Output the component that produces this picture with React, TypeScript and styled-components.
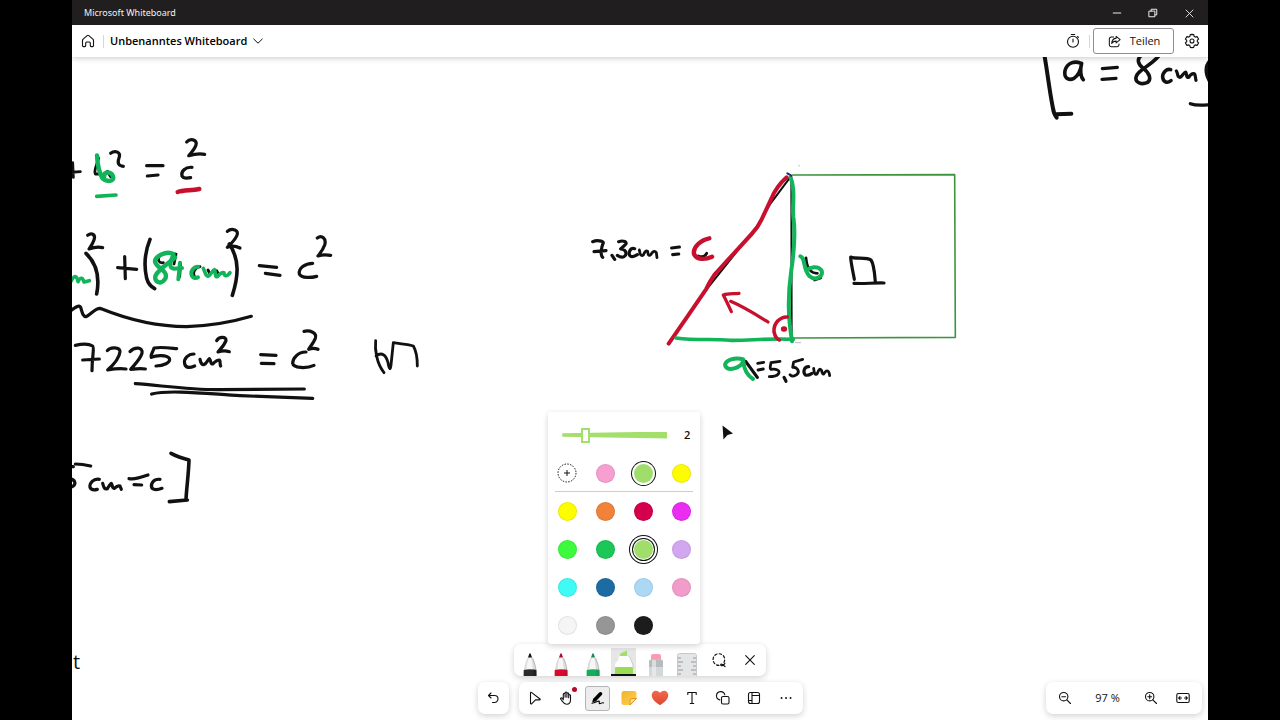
import React from 'react';
import styled, { createGlobalStyle, css } from 'styled-components';

const INK = '#111';
const RED = '#c8102e';
const GREEN = '#12b45a';
const LIME = '#a4df6c';

const GlobalStyle = createGlobalStyle`
  *, *::before, *::after { box-sizing: border-box; }
  body {
    margin: 0;
    background: #000;
    font-family: "Open Sans", "Noto Sans", sans-serif;
    color: #111;
  }
  button { font: inherit; color: inherit; }
`;

const Stage = styled.div`
  min-height: 100vh;
  padding: 0 72px;
  display: flex;
`;

const Window = styled.div`
  flex: 1;
  min-width: 0;
  display: flex;
  flex-direction: column;
  background: #fff;
`;

const TitleBar = styled.div`
  height: 25px;
  padding: 1px 1px 0 12px;
  display: flex;
  align-items: center;
  justify-content: space-between;
  background: #201e1f;
  color: #f2f2f2;
  font-family: "Noto Sans", sans-serif;
  font-size: 9px;
  line-height: 24px;
`;

const WindowControls = styled.div`
  display: flex;
`;

const PlainButton = styled.button`
  border: 0;
  padding: 0;
  background: none;
  display: flex;
  align-items: center;
  justify-content: center;
`;

const WindowButton = styled(PlainButton)`
  width: 36px;
  height: 24px;
`;

const Header = styled.header`
  position: relative;
  z-index: 2;
  height: 32px;
  padding: 0 8px;
  display: flex;
  align-items: center;
  justify-content: space-between;
  background: #fff;
  box-shadow: 0 1px 6px rgba(0, 0, 0, 0.22);
`;

const HeaderGroup = styled.div`
  display: flex;
  align-items: center;
`;

const HeaderButton = styled(PlainButton)`
  width: 16px;
  height: 24px;
`;

const Divider = styled.span<{ $before: number; $after: number }>`
  width: 1px;
  height: 13px;
  margin: 0 ${p => p.$after}px 0 ${p => p.$before}px;
  background: #d6d6d6;
`;

const BoardName = styled.h1`
  margin: 0 3px 0 0;
  font-size: 11px;
  line-height: 16px;
  font-weight: 600;
  color: #000;
`;

const ShareButton = styled(PlainButton)`
  height: 26px;
  width: 81px;
  gap: 8px;
  margin-right: 10px;
  border: 1px solid #8f8f8f;
  border-radius: 3px;
  font-size: 11px;
  line-height: 16px;
`;

const Board = styled.main`
  position: relative;
  flex: 1;
  min-height: 640px;
  overflow: hidden;
`;

const Drawing = styled.svg`
  display: block;
  position: absolute;
  left: 0;
  top: 0;
`;

const BoardText = styled.p`
  position: absolute;
  left: 1px;
  top: 593px;
  margin: 0;
  font-size: 20px;
  line-height: 24px;
`;

const Dock = styled.div`
  position: absolute;
  left: 0;
  right: 0;
  bottom: 6px;
  display: flex;
  flex-direction: column;
  align-items: center;
  gap: 6px;
`;

const DockRow = styled.div`
  display: flex;
  gap: 10px;
`;

const panel = css`
  background: #fff;
  border-radius: 7px;
  box-shadow: 0 2px 6px rgba(0, 0, 0, 0.18);
`;

const Bar = styled.div`
  ${panel}
  display: flex;
  align-items: center;
  height: 32px;
`;

const PenBar = styled(Bar)`
  width: 252px;
`;

const PenSlot = styled.div`
  position: relative;
  flex: 1;
  display: flex;
  justify-content: center;
`;

const PenButton = styled(PlainButton)`
  width: 26px;
  height: 32px;
`;

const MainBar = styled(Bar)`
  width: 284px;
  padding: 0 1px;
  justify-content: space-around;
`;

const UndoBar = styled(Bar)`
  width: 31px;
  justify-content: center;
`;

const ToolButton = styled(PlainButton)<{ $active?: boolean }>`
  position: relative;
  width: 25px;
  height: 25px;
  border-radius: 3px;
  ${p => p.$active && css`
    background: #ededed;
    border: 1px solid #b5b5b5;
  `}
`;

const Alert = styled.span`
  position: absolute;
  top: 1px;
  right: 2px;
  width: 5px;
  height: 5px;
  border-radius: 50%;
  background: #b8082a;
`;

const ZoomBar = styled(Bar)`
  position: absolute;
  right: 6px;
  bottom: 6px;
  width: 156px;
  padding: 0 7px 0 6px;
  justify-content: space-between;
`;

const ZoomGroup = styled.div`
  display: flex;
  gap: 7px;
`;

const ZoomValue = styled.output`
  font-size: 11px;
  line-height: 16px;
`;

const Popup = styled.section`
  ${panel}
  border-radius: 3px;
  position: absolute;
  bottom: 100%;
  left: 50%;
  transform: translateX(-50%);
  width: 152px;
  padding-top: 2px;
`;

const WidthRow = styled.div`
  height: 40px;
  padding: 2px 10px 0 14px;
  display: flex;
  align-items: center;
  justify-content: space-between;
  font-size: 11px;
  line-height: 16px;
  font-weight: 600;
`;

const Slider = styled.label`
  position: relative;
  display: flex;
  width: 105px;
  height: 15px;
  &::before {
    content: '';
    position: absolute;
    inset: 4px 0;
    background: ${LIME};
    clip-path: polygon(0 25%, 100% 0, 100% 100%, 0 75%);
  }
  input {
    position: relative;
    appearance: none;
    width: 100%;
    height: 15px;
    margin: 0;
    background: none;
  }
  input::-webkit-slider-thumb {
    appearance: none;
    width: 9px;
    height: 15px;
    background: #fff;
    border: 2px solid ${LIME};
  }
`;

const Swatches = styled.div`
  display: grid;
  grid-template-columns: repeat(4, 1fr);
  grid-auto-rows: 38px;
  place-items: center;
`;

const Rule = styled.hr`
  margin: -1px 7px 0;
  border: 0;
  border-top: 1px solid #cfcfcf;
`;

const rings = [
  'inset 0 0 0 1px rgba(0, 0, 0, 0.08)',
  '0 0 0 2px #fff, 0 0 0 3px #111',
  '0 0 0 1px #fff, 0 0 0 2px #111, 0 0 0 4px #fff, 0 0 0 5px #111',
];

const Swatch = styled.button<{ $color: string; $rings?: number }>`
  width: 19px;
  height: 19px;
  padding: 0;
  border: 0;
  border-radius: 50%;
  background: ${p => p.$color};
  box-shadow: ${p => rings[p.$rings ?? 0]};
`;

type IconProps = { size?: number; w?: number; children: React.ReactNode };
const Icon = ({ size = 16, w = 1, children }: IconProps) => (
  <svg width={size} height={size} viewBox="0 0 16 16" fill="none" stroke="currentColor"
    strokeWidth={w} strokeLinecap="round" strokeLinejoin="round" aria-hidden="true">
    {children}
  </svg>
);

/* Strokes are recorded at three times the board scale. */
type Stroke = [d: string, width?: number, color?: string];
const Ink = ({ x, y, strokes }: { x: number; y: number; strokes: Stroke[] }) => (
  <g transform={`translate(${x} ${y}) scale(${1 / 3})`}>
    {strokes.map(([d, width = 8, color = INK], i) => (
      <path key={i} d={d} strokeWidth={width * 1.2} stroke={color} />
    ))}
  </g>
);

const givenLength: Stroke[] = [
  ['M133 165C140 200 148 270 158 320C160 335 164 345 170 353L168 343L214 341', 10],
  ['M243 190C225 182 201 187 195 212C191 234 205 243 222 235C238 225 243 205 245 190C240 208 241 230 250 239', 9],
  ['M307 206L352 202', 8],
  ['M306 238L348 235', 8],
  ['M425 165C408 178 415 194 430 205C450 220 455 240 441 248C425 255 405 248 408 232C412 210 450 200 478 166', 9],
  ['M512 209C500 205 487 218 488 232C490 248 502 250 513 242', 9],
  ['M529 213C535 220 530 232 540 232C548 228 552 216 557 216C561 221 558 235 566 232C572 222 576 219 583 221C587 225 586 234 588 241', 8],
  ['M630 182C618 195 614 215 628 242', 9],
  ['M571 311C590 318 605 316 628 314', 8],
];

const formula: Stroke[] = [
  ['M38 98L40 142M32 127L61 125', 7],
  ['M116 84C111 105 100 122 106 132L122 132M142 124L152 140', 7],
  ['M152 70C165 60 184 66 177 84C171 100 176 107 190 109'],
  ['M260 107L309 107'],
  ['M262 138L294 135'],
  ['M396 112C376 110 362 125 366 138C370 146 382 145 392 143'],
  ['M380 36C390 24 412 28 408 45C404 58 392 70 386 77C400 73 420 70 434 73'],
  ['M111 76C112 100 118 126 126 143C136 156 160 156 160 144C158 128 145 124 134 131L132 143', 11, GREEN],
  ['M110 199L168 195', 9, GREEN],
  ['M353 186C370 180 395 182 418 177', 11, RED],
];

const substitution: Stroke[] = [
  ['M83 46C95 36 108 44 102 60C98 72 92 80 87 87C98 83 115 80 128 83', 8],
  ['M78 100C110 130 120 170 110 222', 9],
  ['M194 110L196 176M173 143L230 148', 8],
  ['M270 58C255 95 252 140 260 175C264 190 272 200 284 206', 9],
  ['M300 104C290 122 298 130 310 128M348 102L342 132M362 132L359 170M420 140C406 142 396 158 404 170M444 150L450 162M470 152L476 164', 7],
  ['M340 102C318 90 285 110 285 124C288 145 326 150 316 176C303 196 280 186 287 166C296 148 326 130 345 112', 11, GREEN],
  ['M340 106C326 130 328 144 342 146L366 144M360 128L355 178', 10, GREEN],
  ['M414 140C400 140 390 155 396 168C400 175 408 175 414 172', 10, GREEN],
  ['M430 145C436 160 438 170 446 168C455 160 458 150 463 149C468 156 463 172 472 170C480 160 486 157 492 158C492 168 500 172 510 158', 9, GREEN],
  ['M34 182C42 166 50 165 54 185C60 172 68 170 72 186L88 182', 9, GREEN],
  ['M502 34C515 22 540 30 530 48C525 60 512 72 502 82C515 76 528 78 540 84', 8],
  ['M508 72C540 120 535 170 517 226', 9],
  ['M598 137L650 142M616 160L660 166', 8],
  ['M758 130C735 130 715 145 718 162C725 176 755 173 770 169', 8],
  ['M772 54C785 44 800 55 794 75C788 92 778 102 774 108C785 104 800 104 812 106', 8],
  ['M30 274C45 262 58 253 62 262C66 275 68 290 78 290C90 285 105 265 120 265C145 275 250 320 380 320C450 318 520 305 574 289', 8],
];

const result: Stroke[] = [
  ['M46 76C65 72 88 72 98 78C104 82 96 110 96 152M68 120L118 117'],
  ['M142 92C150 80 180 80 180 95C178 115 160 135 143 150C165 146 180 145 198 147'],
  ['M210 95C225 78 250 82 246 100C240 120 222 135 212 148C230 146 245 145 256 147'],
  ['M350 86C330 84 305 80 282 84C280 95 270 105 274 112C290 105 320 105 328 115C333 128 310 138 288 138', 8],
  ['M402 102C385 102 370 115 374 132C378 146 392 143 404 138', 8],
  ['M420 118C422 128 424 135 432 134C440 130 444 118 448 116C454 122 450 132 458 132C465 125 470 120 478 120C483 125 478 132 482 138'],
  ['M470 62C478 48 500 50 498 62C492 78 480 88 474 96C485 92 498 92 508 95'],
  ['M602 104L648 106M604 130L642 131'],
  ['M738 96C715 95 698 115 698 130C700 145 740 146 762 136', 8],
  ['M732 34C750 30 772 38 766 55C760 70 750 80 746 88C755 84 765 84 774 88'],
  ['M947 62C944 90 950 130 972 158M948 108C965 95 978 104 984 128C988 150 991 150 993 135L1000 68C1020 72 1045 72 1060 78C1070 95 1072 115 1072 138', 7],
  ['M226 191C300 196 390 210 480 209L733 207', 8],
  ['M275 222C330 208 450 222 540 227L758 235', 8],
  ['M46 432C60 432 75 434 92 438M30 440L40 440M30 476C46 480 52 494 32 502'],
  ['M118 478C100 475 88 490 90 502C94 512 104 510 112 508'],
  ['M128 490C132 505 134 508 142 506C148 498 150 492 154 490C158 496 156 506 164 505C170 498 175 496 180 498L184 508'],
  ['M207 476C225 480 245 472 264 465M222 494L245 495'],
  ['M300 478C280 476 270 492 276 505C285 512 298 508 306 505'],
  ['M333 400C350 409 368 415 387 420C386 460 380 500 378 538L382 540L328 545', 9],
];

const triangle: Stroke[] = [
  ['M38 245C50 240 68 242 70 248C64 262 60 285 68 292M42 275L78 272'],
  ['M96 286L104 298'],
  ['M116 245C130 240 144 246 136 254L122 267C140 268 142 284 132 290C126 293 118 290 112 286'],
  ['M164 266C150 262 144 280 150 287C156 292 166 288 172 284'],
  ['M178 270C180 285 184 290 190 285C194 275 198 270 203 274C204 284 206 290 212 284C218 275 224 270 229 278L231 293', 7],
  ['M275 264L298 261M278 284L296 282'],
  ['M632 50L572 130L530 200L384 383L270 545', 5],
  ['M634 50L635 540', 5],
  ['M620 52C602 68 584 92 574 116L545 178Q534 202 515 222L450 293L405 342Q388 366 378 388L322 470L266 551', 10, RED],
  ['M632 54C648 90 636 130 640 170C647 220 640 290 634 330C624 400 624 450 630 500L636 544', 10, GREEN],
  ['M288 534C350 542 400 536 450 541C510 542 560 534 640 538', 9, GREEN],
  ['M622 40L634 47', 5, '#1f2a78'],
  ['M656 17L659 18M646 548L662 548', 2, '#aab'],
  ['M355 288C365 292 375 290 380 280', 7],
  ['M388 235C362 240 338 262 342 282C350 300 375 300 396 290', 11, RED],
  ['M678 294C680 320 690 340 712 340', 7],
  ['M704 360L722 354', 7],
  ['M661 289C677 293 668 328 688 348C706 364 730 350 725 332C714 316 690 322 680 330', 10, GREEN],
  ['M564 486C530 465 490 440 452 424M454 455C445 435 435 415 430 405C445 400 460 402 477 400', 8, RED],
  ['M622 471C600 470 580 490 582 515C585 530 592 538 598 540', 9, RED],
  ['M611 507L613 507', 14, RED],
  ['M497 604L532 652', 8],
  ['M490 598C465 590 430 602 436 618C445 635 480 625 490 604C492 625 500 645 519 657', 10, GREEN],
  ['M533 610L551 607M534 630L550 627', 7],
  ['M600 604L573 608C571 620 568 625 573 628C590 626 602 632 595 642C588 650 578 650 568 650', 7],
  ['M612 652L618 664'],
  ['M668 598L641 606L638 622C650 620 662 634 650 644C642 650 634 648 630 644', 7],
  ['M686 620C672 620 668 636 676 645C684 648 690 644 696 640'],
  ['M701 625C702 640 706 648 712 640C716 628 721 624 725 632C726 642 730 646 734 638C740 630 747 630 749 647', 7],
];

const square: Stroke[] = [
  ['M38 45L524 44L526 532L38 534', 4, '#3f9440'],
  ['M223 358C218 330 212 305 212 291C225 298 260 290 273 300C283 315 284 345 286 366', 8],
  ['M222 370C250 372 280 368 312 369', 8],
];

const Pen = ({ color, dark }: { color: string; dark: string }) => (
  <svg width="26" height="32" viewBox="0 0 26 32" aria-hidden="true">
    <path d="M6.500 32C6.500 26 8 18 11 13H15C18 18 19.500 26 19.500 32Z" fill="#dcdcdc" />
    <path d="M9 32C9 25 10 18 12 13H14C15.500 19 16 26 15.500 32Z" fill="#f6f6f6" />
    <path d="M15.500 14C18 19 19.500 26 19.500 32" fill="none" stroke="#aaa" strokeWidth=".8" />
    <path d="M11 13.500L12.300 9.800Q13 8.600 13.700 9.800L15 13.500Z" fill={dark} />
    <path d="M6.700 26Q13 24.600 19.300 26V32H6.700Z" fill={color} />
    <path d="M16.500 25.200L19.300 26V32H16.500Z" fill={dark} opacity=".5" />
  </svg>
);

const Highlighter = () => (
  <svg width="26" height="32" viewBox="0 0 26 32" aria-hidden="true">
    <path d="M0 4H25V30H0Z" fill="#e6e6e6" />
    <path d="M8.500 13L9.500 9.500L16 6.500V13Z" fill={LIME} />
    <path d="M4 25V21Q4 18.500 6 17.500Q7.500 16.500 7.500 13.500Q7.500 12 9 12H16.500Q19 12 19.500 14.500Q20 17 21 18.500Q22 20 22 22V25Z" fill="#fdfdfd" />
    <path d="M17.500 12.300Q19.200 13 19.500 14.500Q20 17 21 18.500Q22 20 22 22V24" fill="none" stroke="#c4c4c4" strokeWidth=".8" />
    <path d="M4 30V24Q4 23 5 23H21Q22 23 22 24V30Z" fill="#9bdc55" />
    <path d="M0 30H25V32H0Z" fill="#111" />
  </svg>
);

const Eraser = () => (
  <svg width="26" height="32" viewBox="0 0 26 32" aria-hidden="true">
    <path d="M8 16V12Q8 10 10 10H16Q18 10 18 12V16Z" fill="#f79cb2" />
    <path d="M6 32V18Q6 15.500 8.500 15.500H17.500Q20 15.500 20 18V32Z" fill="#d3d8da" />
    <path d="M6 23V18Q6 15.500 8.500 15.500H17.500Q20 15.500 20 18V23Z" fill="#b5bcbd" />
    <path d="M9 16H13V32H9Z" fill="#f1f3f4" opacity=".6" />
  </svg>
);

const Ruler = () => (
  <svg width="26" height="32" viewBox="0 0 26 32" aria-hidden="true">
    <rect x="3.500" y="9.500" width="19" height="25" rx="2" fill="#e3e5e6" stroke="#c6c9ca" />
    <path d="M4 14H7M4 18H9M4 22H7M4 26H9M4 30H7M22 14H19M22 18H17M22 22H19M22 26H17M22 30H19" stroke="#8d9193" strokeWidth=".9" />
  </svg>
);

const Lasso = () => (
  <Icon w={1.2}>
    <path d="M13 10.300A5.800 5.800 0 1 0 8.600 13.300" strokeDasharray="2.400 2.200" />
    <path d="M14 14.500C12.800 13.200 11.200 11.600 10 12.300C9 13.200 10.500 14.200 12 13.200C12.800 12.700 13.500 12 13.900 11.200" />
  </Icon>
);

const Cross = ({ size = 16 }: { size?: number }) => (
  <Icon size={size} w={1.1}><path d="M3.700 3.700L12.300 12.300M12.300 3.700L3.700 12.300" /></Icon>
);

const palette: [string, string][] = [
  ['Gelb', '#fdfd00'], ['Orange', '#f0823a'], ['Rot', '#d5004d'], ['Magenta', '#eb2cf2'],
  ['Hellgrün', '#3dfa3c'], ['Grün', '#1bc757'], ['Limette', '#a0de6c'], ['Flieder', '#d3a6f0'],
  ['Türkis', '#3ffbf5'], ['Blau', '#1c6ca3'], ['Hellblau', '#abd9f5'], ['Rosa', '#f29cc9'],
  ['Weiß', '#f5f5f5'], ['Grau', '#969696'], ['Schwarz', '#1c1c1c'],
];

export default function App() {
  return (
    <>
      <GlobalStyle />
      <Stage>
        <Window>
          <TitleBar>
            <span>Microsoft Whiteboard</span>
            <WindowControls>
              <WindowButton aria-label="Minimieren"><Icon size={12} w={1.3}><path d="M3 8H13" /></Icon></WindowButton>
              <WindowButton aria-label="Fenster verkleinern">
                <Icon size={12} w={1.3}><path d="M3 5.500H10.500V13H3ZM5.500 5.500V3H13V10.500H10.500" /></Icon>
              </WindowButton>
              <WindowButton aria-label="Fenster schließen"><Cross size={13} /></WindowButton>
            </WindowControls>
          </TitleBar>

          <Header>
            <HeaderGroup>
              <HeaderButton aria-label="Startseite">
                <Icon w={1.1}>
                  <path d="M2.500 7.600c0-.6.2-1 .6-1.400L7.200 2.600a1.200 1.200 0 0 1 1.600 0l4.100 3.600c.4.4.6.8.6 1.400v5a1 1 0 0 1-1 1h-1.200a1 1 0 0 1-1-1V10a1 1 0 0 0-1-1H6.700a1 1 0 0 0-1 1v2.600a1 1 0 0 1-1 1H3.500a1 1 0 0 1-1-1z" />
                </Icon>
              </HeaderButton>
              <Divider $before={7} $after={6} />
              <BoardName>Unbenanntes Whiteboard</BoardName>
              <HeaderButton aria-label="Whiteboard-Optionen">
                <Icon><path d="M3.700 6L8 10.200L12.300 6" /></Icon>
              </HeaderButton>
            </HeaderGroup>
            <HeaderGroup>
              <HeaderButton aria-label="Timer">
                <Icon w={1.1}><circle cx="8" cy="8.800" r="5.500" /><path d="M8 6V9M6.300 1.500H9.700M12.600 3.500L13.400 4.300" /></Icon>
              </HeaderButton>
              <Divider $before={8} $after={3} />
              <ShareButton>
                <Icon size={15} w={1.1}>
                  <path d="M7 3.200H4.500A2 2 0 0 0 2.500 5.200V11.500A2 2 0 0 0 4.500 13.500H10.800A2 2 0 0 0 12.800 11.500V10.800" />
                  <path d="M9.800 2.500L14 6L9.800 9.500V7.600C7.800 7.500 6.300 8.300 5 10C5.200 7 6.800 4.700 9.800 4.400Z" />
                </Icon>
                Teilen
              </ShareButton>
              <HeaderButton aria-label="Einstellungen">
                <Icon w={1.1}>
                  <path d="M8 1.400L9.700 1.600L10.200 3.500L11.300 4.100L13.100 3.600L14.600 6L13.300 7.300V8.700L14.600 10L13.100 12.400L11.300 11.900L10.200 12.500L9.700 14.400L8 14.600L6.300 14.400L5.800 12.500L4.700 11.900L2.900 12.400L1.400 10L2.700 8.700V7.300L1.400 6L2.900 3.600L4.700 4.100L5.800 3.500L6.300 1.600Z" />
                  <circle cx="8" cy="8" r="2" />
                </Icon>
              </HeaderButton>
            </HeaderGroup>
          </Header>

          <Board>
            <Drawing width="1136" height="663" viewBox="72 57 1136 663" fill="none"
              strokeLinecap="round" strokeLinejoin="round" role="img" aria-label="Satz des Pythagoras">
              <Ink x={1000} y={0} strokes={givenLength} />
              <Ink x={60} y={130} strokes={formula} />
              <Ink x={60} y={220} strokes={substitution} />
              <Ink x={60} y={320} strokes={result} />
              <Ink x={780} y={160} strokes={square} />
              <Ink x={580} y={160} strokes={triangle} />
              <path d="M722.500 425.500L723.500 439.500L727.500 435L733 433.500Z" fill="#111" />
            </Drawing>
            <BoardText>t</BoardText>

            <Dock>
              <PenBar role="toolbar" aria-label="Stifte">
                <PenSlot><PenButton aria-label="Schwarzer Stift"><Pen color="#2b2b2b" dark="#151515" /></PenButton></PenSlot>
                <PenSlot><PenButton aria-label="Roter Stift"><Pen color="#d8082f" dark="#a80f2e" /></PenButton></PenSlot>
                <PenSlot><PenButton aria-label="Grüner Stift"><Pen color="#14ad5b" dark="#198a50" /></PenButton></PenSlot>
                <PenSlot>
                  <PenButton aria-label="Textmarker" aria-pressed="true"><Highlighter /></PenButton>
                  <Popup aria-label="Farbe und Stärke">
                    <WidthRow>
                      <Slider>
                        <input type="range" min={1} max={6} defaultValue={2} aria-label="Stärke" />
                      </Slider>
                      <span>2</span>
                    </WidthRow>
                    <Swatches>
                      <PlainButton aria-label="Farbe hinzufügen">
                        <svg width="20" height="20" viewBox="0 0 20 20" fill="none" stroke="#111" aria-hidden="true">
                          <circle cx="10" cy="10" r="9" strokeDasharray="1.500 1.330" />
                          <path d="M10 7V13M7 10H13" />
                        </svg>
                      </PlainButton>
                      <Swatch $color="#f79fd0" aria-label="Zuletzt: Rosa" />
                      <Swatch $color="#a0de6c" $rings={1} aria-label="Zuletzt: Limette" aria-pressed="true" />
                      <Swatch $color="#fdfd00" aria-label="Zuletzt: Gelb" />
                    </Swatches>
                    <Rule />
                    <Swatches>
                      {palette.map(([name, color]) => (
                        <Swatch key={name} $color={color} $rings={name === 'Limette' ? 2 : 0} aria-label={name} />
                      ))}
                    </Swatches>
                  </Popup>
                </PenSlot>
                <PenSlot><PenButton aria-label="Radierer"><Eraser /></PenButton></PenSlot>
                <PenSlot><PenButton aria-label="Lineal"><Ruler /></PenButton></PenSlot>
                <PenSlot><PenButton aria-label="Lasso"><Lasso /></PenButton></PenSlot>
                <PenSlot><PenButton aria-label="Schließen"><Cross /></PenButton></PenSlot>
              </PenBar>

              <DockRow>
                <UndoBar>
                  <ToolButton aria-label="Rückgängig">
                    <Icon w={1.1}><path d="M6 3L3.500 5.500L6 8M3.500 5.500H9.500A3.500 3.500 0 0 1 9.500 12.500H7.500" /></Icon>
                  </ToolButton>
                </UndoBar>
                <MainBar role="toolbar" aria-label="Werkzeuge">
                  <ToolButton aria-label="Auswählen">
                    <Icon w={1.1}><path d="M3.500 2.800C3.500 2.300 4 2 4.400 2.400L13 9C13.400 9.400 13.200 9.900 12.700 9.900H8.500L4.800 13.700C4.300 14.100 3.500 13.900 3.500 13.300Z" /></Icon>
                  </ToolButton>
                  <ToolButton aria-label="Verschieben">
                    <Icon w={1.1}>
                      <path d="M5.300 9.800V4.200C5.300 2.900 7.100 2.900 7.100 4.200V7.300M7.100 7V3C7.100 1.700 8.900 1.700 8.900 3V7.300M8.900 7V3.800C8.900 2.500 10.700 2.500 10.700 3.800V7.800M10.700 7.500V5.600C10.700 4.400 12.500 4.400 12.500 5.600V10C12.500 12.600 11 14.200 8.600 14.200C6.600 14.200 5.700 13.400 4.800 11.800L2.600 9C2.200 8 3.600 7.500 4.300 8.300L5.300 9.600" />
                    </Icon>
                    <Alert />
                  </ToolButton>
                  <ToolButton aria-label="Freihand" aria-pressed="true" $active>
                    <svg width="16" height="16" viewBox="0 0 16 16" fill="none" strokeLinecap="round" aria-hidden="true">
                      <path d="M10.500 3.800L5.300 9.300" stroke="#000" strokeWidth="3.600" />
                      <path d="M3.300 8.200L6.700 10.900L2.200 12.600Z" fill="#000" />
                      <path d="M2 13.200C5 13.200 7 11.300 8.800 11C10.200 11 8.300 13.400 9.800 13.600C11.300 13.600 11.800 12.200 13.600 12.900" stroke="#000" strokeWidth="1.100" />
                    </svg>
                  </ToolButton>
                  <ToolButton aria-label="Notizen">
                    <svg width="16" height="16" viewBox="0 0 16 16" aria-hidden="true">
                      <defs>
                        <linearGradient id="note" x1="0" y1="0" x2="1" y2="1">
                          <stop offset="0" stopColor="#f3b22b" /><stop offset="1" stopColor="#fcd34f" />
                        </linearGradient>
                      </defs>
                      <path d="M3 1H13Q15.500 1 15.500 3.500V9L9.500 15H3Q.5 15 .5 12.500V3.500Q.5 1 3 1Z" fill="url(#note)" />
                      <path d="M15.500 8.500L9 15V10.500Q9 8.500 11 8.500Z" fill="#fbe08a" stroke="#e08b1d" strokeWidth=".9" strokeLinejoin="round" />
                    </svg>
                  </ToolButton>
                  <ToolButton aria-label="Reaktionen">
                    <svg width="18" height="16" viewBox="0 0 18 16" aria-hidden="true">
                      <defs>
                        <linearGradient id="heart" x1="0" y1="0" x2="0" y2="1">
                          <stop offset="0" stopColor="#f2694b" /><stop offset="1" stopColor="#dd4634" />
                        </linearGradient>
                      </defs>
                      <path d="M9 15.200C5.500 13 .7 9.500 .7 5.300C.7 2.600 2.700 .8 4.900 .8C6.700 .8 8.200 1.700 9 3.100C9.800 1.700 11.300 .8 13.100 .8C15.300 .8 17.300 2.600 17.300 5.300C17.300 9.500 12.500 13 9 15.200Z" fill="url(#heart)" />
                    </svg>
                  </ToolButton>
                  <ToolButton aria-label="Text">
                    <Icon w={1.1}><path d="M3.800 4.500V2.500H12.200V4.500M8 2.500V13.500M6.300 13.500H9.700" /></Icon>
                  </ToolButton>
                  <ToolButton aria-label="Formen">
                    <Icon w={1.1}><path d="M4.800 9.900A4.200 4.200 0 1 1 9.800 4.800" /><rect x="6.500" y="6.500" width="7.500" height="7.500" rx="1.500" /></Icon>
                  </ToolButton>
                  <ToolButton aria-label="Vorlagen">
                    <Icon w={1.1}><rect x="2.500" y="2.500" width="11" height="11" rx="2" /><path d="M6 2.500V13.500M6 5.500H13.500M2.500 10.500H6" /></Icon>
                  </ToolButton>
                  <ToolButton aria-label="Mehr">
                    <Icon w={1.800}><path d="M3.500 8H3.600M8 8H8.100M12.500 8H12.600" /></Icon>
                  </ToolButton>
                </MainBar>
              </DockRow>
            </Dock>

            <ZoomBar role="toolbar" aria-label="Zoom">
              <ToolButton aria-label="Verkleinern">
                <Icon w={1.1}><circle cx="6.700" cy="6.700" r="4.200" /><path d="M9.800 9.800L13.500 13.500M4.800 6.700H8.600" /></Icon>
              </ToolButton>
              <ZoomValue>97 %</ZoomValue>
              <ZoomGroup>
                <ToolButton aria-label="Vergrößern">
                  <Icon w={1.1}><circle cx="6.700" cy="6.700" r="4.200" /><path d="M9.800 9.800L13.500 13.500M4.800 6.700H8.600M6.700 4.800V8.600" /></Icon>
                </ToolButton>
                <ToolButton aria-label="Einpassen">
                  <Icon w={1.1}><rect x="1.800" y="3.500" width="12.400" height="9" rx="1.500" /><path d="M5 6.700L3.700 8L5 9.300M3.900 8H6.500M11 6.700L12.300 8L11 9.300M12.100 8H9.500" /></Icon>
                </ToolButton>
              </ZoomGroup>
            </ZoomBar>
          </Board>
        </Window>
      </Stage>
    </>
  );
}
